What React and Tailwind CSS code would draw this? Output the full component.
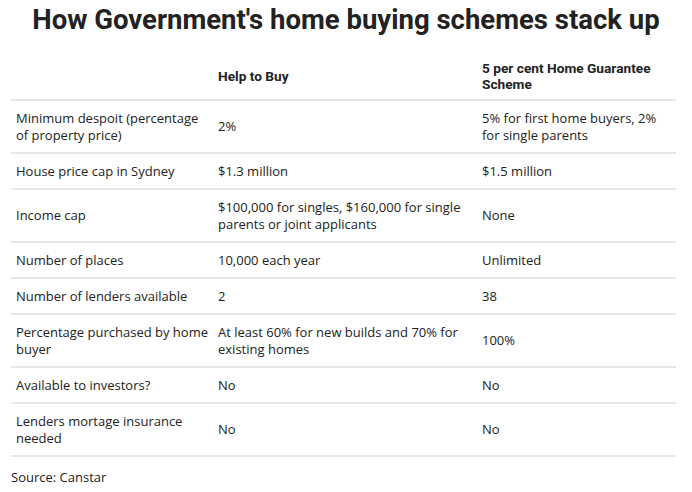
const rows = [
  ["Minimum despoit (percentage of property price)", "2%", "5% for first home buyers, 2% for single parents"],
  ["House price cap in Sydney", "$1.3 million", "$1.5 million"],
  ["Income cap", "$100,000 for singles, $160,000 for single parents or joint applicants", "None"],
  ["Number of places", "10,000 each year", "Unlimited"],
  ["Number of lenders available", "2", "38"],
  ["Percentage purchased by home buyer", "At least 60% for new builds and 70% for existing homes", "100%"],
  ["Available to investors?", "No", "No"],
  ["Lenders mortage insurance needed", "No", "No"],
];

export default function App() {
  return (
    <div className="w-[692px] h-[492px] bg-white text-[#222] overflow-hidden" style={{ fontFamily: '"Open Sans", sans-serif' }}>
      <h1
        className="text-center text-[27.5px] leading-[30px] font-bold pt-[5px]"
        style={{ fontFamily: 'Roboto, sans-serif' }}
      >
        How Government's home buying schemes stack up
      </h1>

      <div className="ml-[11px] w-[665px] mt-[17px]">
        {/* header */}
        <div
          className="grid grid-cols-[202px_264px_199px] h-[49px] items-center border-b-2 border-[#e6e6e6] text-[13.7px] leading-[16px] font-bold"
          style={{ fontFamily: 'Roboto, sans-serif' }}
        >
          <div className="px-[5px]" />
          <div className="px-[5px]">Help to Buy</div>
          <div className="px-[5px] pr-[20px]">5 per cent Home Guarantee Scheme</div>
        </div>

        {rows.map((r, i) => (
          <div
            key={i}
            className="grid grid-cols-[202px_264px_199px] items-center border-b-2 border-[#e6e6e6] py-[8.5px] text-[13px] leading-[17px]"
          >
            {r.map((c, j) => (
              <div key={j} className="px-[5px]">
                {c}
              </div>
            ))}
          </div>
        ))}

        <div className="pt-[12px] text-[13px] leading-[17px]">Source: Canstar</div>
      </div>
    </div>
  );
}
